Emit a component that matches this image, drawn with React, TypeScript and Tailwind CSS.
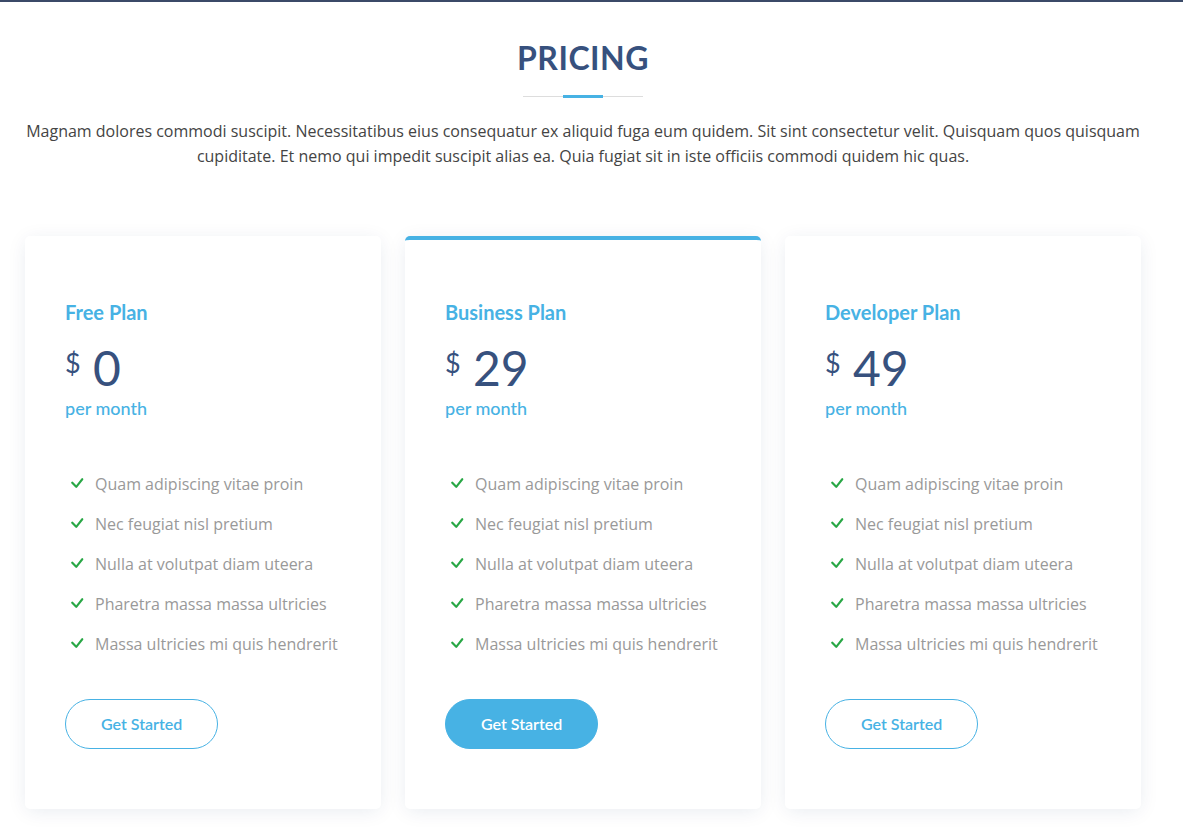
const plans = [
  { name: 'Free Plan', price: '0', featured: false },
  { name: 'Business Plan', price: '29', featured: true },
  { name: 'Developer Plan', price: '49', featured: false },
]

const features = [
  'Quam adipiscing vitae proin',
  'Nec feugiat nisl pretium',
  'Nulla at volutpat diam uteera',
  'Pharetra massa massa ultricies',
  'Massa ultricies mi quis hendrerit',
]

const heading = { fontFamily: 'Lato, "Noto Sans", sans-serif' }
const body = { fontFamily: '"Open Sans", "Noto Sans", sans-serif' }

function Check() {
  return (
    <svg viewBox="0 0 16 16" width="24" height="24" fill="#28a745" className="shrink-0 -my-[4px] -mt-[6px]">
      <path d="M10.97 4.97a.75.75 0 0 1 1.07 1.05l-3.99 4.99a.75.75 0 0 1-1.08.02L4.324 8.384a.75.75 0 1 1 1.06-1.06l2.094 2.093 3.473-4.425a.267.267 0 0 1 .02-.022z" />
    </svg>
  )
}

function PlanCard({ name, price, featured }: { name: string; price: string; featured: boolean }) {
  return (
    <div
      className={`h-full rounded-[5px] bg-white px-10 pt-[60px] pb-[60px] border-t-4 shadow-[0_3px_20px_-2px_rgba(20,45,100,0.1)] ${
        featured ? 'border-[#47b2e4]' : 'border-white'
      }`}
    >
      <h3 className="text-[20px] leading-[24px] font-bold text-[#47b2e4] mb-[15px]" style={heading}>
        {name}
      </h3>
      <h4 className="text-[48px] leading-[58px] font-normal text-[#37517e] mb-[25px]" style={heading}>
        <sup className="text-[27px]">$</sup> {price}
        <span className="block text-[18px] leading-[22px] text-[#47b2e4] font-medium">per month</span>
      </h4>
      <ul className="flex flex-col py-5 mb-[15px] text-[#999] leading-5 text-[16px]" style={body}>
        {features.map((f) => (
          <li key={f} className="flex items-center gap-[6px] h-10">
            <Check />
            <span>{f}</span>
          </li>
        ))}
      </ul>
      <a
        href="#"
        className={`inline-block rounded-full border border-[#47b2e4] px-[35px] py-3 text-[16px] leading-6 font-semibold ${
          featured ? 'bg-[#47b2e4] text-white' : 'text-[#47b2e4]'
        }`}
        style={heading}
      >
        Get Started
      </a>
    </div>
  )
}

export default function App() {
  return (
    <div className="min-h-[834px] bg-white">
      <div className="h-[2px] bg-[#3b4a68]" />
      <section className="w-[1166px] pt-[37px] pb-[25px]">
        <div className="mx-auto w-[1140px] px-3">
          <div className="flex flex-col items-center text-center pb-[30px]">
            <h2
              className="text-[32px] leading-[38px] font-bold uppercase tracking-[0.5px] text-[#37517e] pb-[18px]"
              style={heading}
            >
              Pricing
            </h2>
            <div className="flex items-center w-[120px] h-[3px] mb-[21px]">
              <div className="flex-1 h-px bg-[#ddd]" />
              <div className="w-10 h-[3px] bg-[#47b2e4]" />
              <div className="flex-1 h-px bg-[#ddd]" />
            </div>
            <p className="text-[16px] leading-[25px] text-[#444]" style={body}>
              Magnam dolores commodi suscipit. Necessitatibus eius consequatur ex aliquid fuga eum quidem. Sit sint
              consectetur velit. Quisquam quos quisquam cupiditate. Et nemo qui impedit suscipit alias ea. Quia fugiat
              sit in iste officiis commodi quidem hic quas.
            </p>
          </div>
          <div className="grid grid-cols-3 gap-6 mt-[37px]">
            {plans.map((p) => (
              <PlanCard key={p.name} {...p} />
            ))}
          </div>
        </div>
      </section>
    </div>
  )
}
